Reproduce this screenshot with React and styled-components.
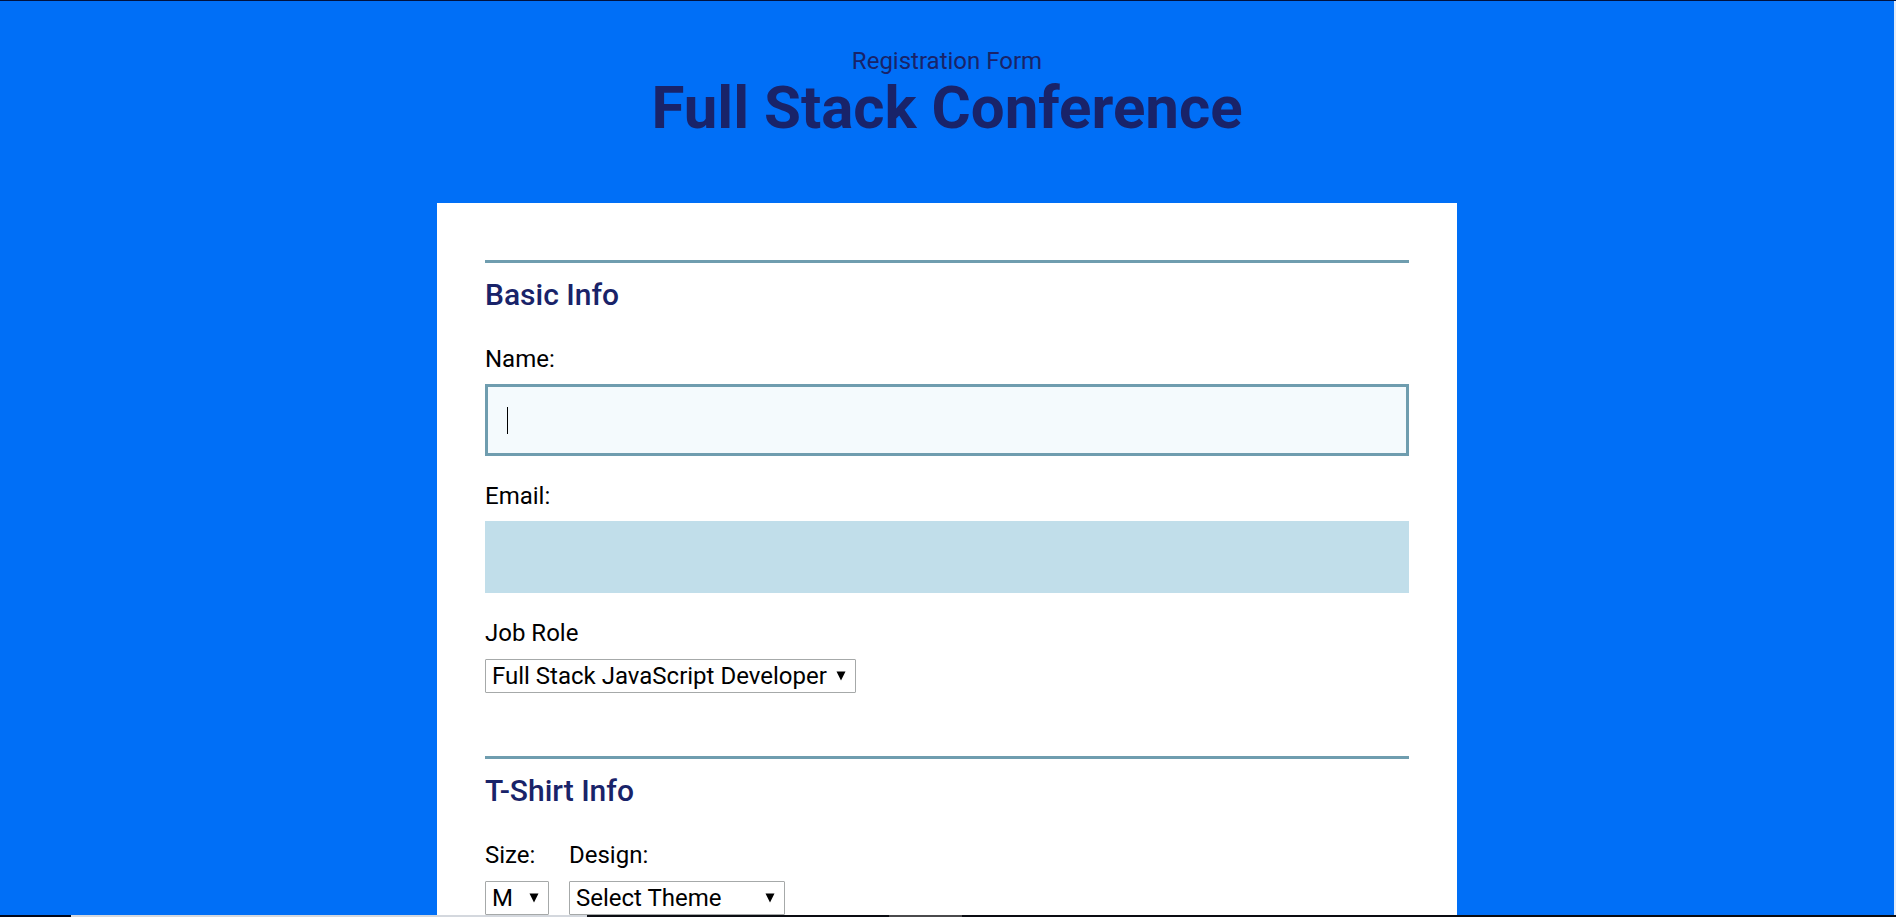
import React from "react";
import styled, { createGlobalStyle } from "styled-components";

const colors = {
  page: "#006ff7",
  navy: "#192369",
  rule: "#6f9daf",
  field: "#c1deea",
  fieldActive: "#f4fafd",
};

const GlobalStyle = createGlobalStyle`
  *, *::before, *::after { box-sizing: border-box; }
  body {
    margin: 0;
    font-family: Roboto, "Liberation Sans", sans-serif;
    font-size: 24px;
    line-height: 28px;
    color: #000;
  }
`;

const Window = styled.div`
  display: flex;
  flex-direction: column;
  height: 100vh;
  border-top: 1px solid #00123f;
`;

const Page = styled.main`
  flex: 1;
  min-height: 0;
  overflow-y: auto;
  scrollbar-width: none;
  background: ${colors.page};
  border-right: 2px solid #e4ecf8;
`;

const Header = styled.header`
  padding: 46px 24px 62px;
  text-align: center;
  color: ${colors.navy};
`;

const Kicker = styled.p`
  margin: 0;
`;

const Title = styled.h1`
  margin: 0;
  font-size: 60px;
  line-height: 66px;
  font-weight: 700;
`;

const Card = styled.form`
  display: flex;
  flex-direction: column;
  gap: 63px;
  max-width: 1020px;
  margin: 0 auto;
  padding: 57px 48px 48px;
  background: #fff;
`;

const Section = styled.section`
  border-top: 3px solid ${colors.rule};
  padding-top: 14px;
`;

const SectionTitle = styled.h2`
  margin: 0 0 32px;
  font-size: 30px;
  line-height: 36px;
  font-weight: 500;
  color: ${colors.navy};
`;

const Fields = styled.div`
  display: flex;
  flex-direction: ${(p) => (p.$row ? "row" : "column")};
  gap: ${(p) => (p.$row ? "20px" : "26px")};
`;

const Field = styled.div`
  display: flex;
  flex-direction: column;
  align-items: flex-start;
  gap: 11px;
`;

const SelectField = styled(Field)`
  gap: 12px;
`;

const InputFrame = styled.div`
  position: relative;
  width: 100%;
`;

const Input = styled.input`
  display: block;
  width: 100%;
  height: 72px;
  padding: 0 19px;
  border: 3px solid ${(p) => (p.$active ? colors.rule : colors.field)};
  border-radius: 0;
  outline: none;
  background: ${(p) => (p.$active ? colors.fieldActive : colors.field)};
  font: inherit;
  caret-color: transparent;
`;

const Caret = styled.span`
  position: absolute;
  left: 22px;
  top: 23px;
  width: 1px;
  height: 27px;
  background: #000;
  pointer-events: none;
`;

const SelectFrame = styled.div`
  position: relative;
  width: ${(p) => p.$width};
`;

const Select = styled.select`
  appearance: none;
  display: block;
  width: 100%;
  height: 34px;
  padding: 0 24px 0 6px;
  border: 1px solid #a6a9a9;
  border-radius: 1px;
  background: #fff;
  color: #000;
  font: inherit;
`;

const Arrow = styled.svg`
  position: absolute;
  right: 10px;
  top: 12px;
  width: 10px;
  height: 10px;
  pointer-events: none;
`;

function Dropdown({ id, width, options }) {
  return (
    <SelectFrame $width={width}>
      <Select id={id} defaultValue={options[0]}>
        {options.map((option) => (
          <option key={option}>{option}</option>
        ))}
      </Select>
      <Arrow viewBox="0 0 10 10" aria-hidden="true">
        <path d="M0.5 0.5h9L5 9.5z" />
      </Arrow>
    </SelectFrame>
  );
}

const Taskbar = styled.div`
  display: flex;
  height: 2px;
  background: #0a0c12;
`;

const TaskbarSegment = styled.span`
  width: ${(p) => p.$width};
  background: ${(p) => p.$color};
`;

export default function App() {
  return (
    <Window>
      <GlobalStyle />
      <Page>
        <Header>
          <Kicker>Registration Form</Kicker>
          <Title>Full Stack Conference</Title>
        </Header>
        <Card>
          <Section>
            <SectionTitle>Basic Info</SectionTitle>
            <Fields>
              <Field>
                <label htmlFor="name">Name:</label>
                <InputFrame>
                  <Input id="name" type="text" $active />
                  <Caret />
                </InputFrame>
              </Field>
              <Field>
                <label htmlFor="email">Email:</label>
                <InputFrame>
                  <Input id="email" type="email" />
                </InputFrame>
              </Field>
              <SelectField>
                <label htmlFor="role">Job Role</label>
                <Dropdown id="role" width="371px" options={["Full Stack JavaScript Developer"]} />
              </SelectField>
            </Fields>
          </Section>
          <Section>
            <SectionTitle>T-Shirt Info</SectionTitle>
            <Fields $row>
              <SelectField>
                <label htmlFor="size">Size:</label>
                <Dropdown id="size" width="64px" options={["M"]} />
              </SelectField>
              <SelectField>
                <label htmlFor="design">Design:</label>
                <Dropdown id="design" width="216px" options={["Select Theme"]} />
              </SelectField>
            </Fields>
          </Section>
        </Card>
      </Page>
      <Taskbar>
        <TaskbarSegment $width="71px" $color="#02091c" />
        <TaskbarSegment $width="516px" $color="#d4d8de" />
        <TaskbarSegment $width="302px" $color="#0a0c12" />
        <TaskbarSegment $width="73px" $color="#4a4a4c" />
      </Taskbar>
    </Window>
  );
}
